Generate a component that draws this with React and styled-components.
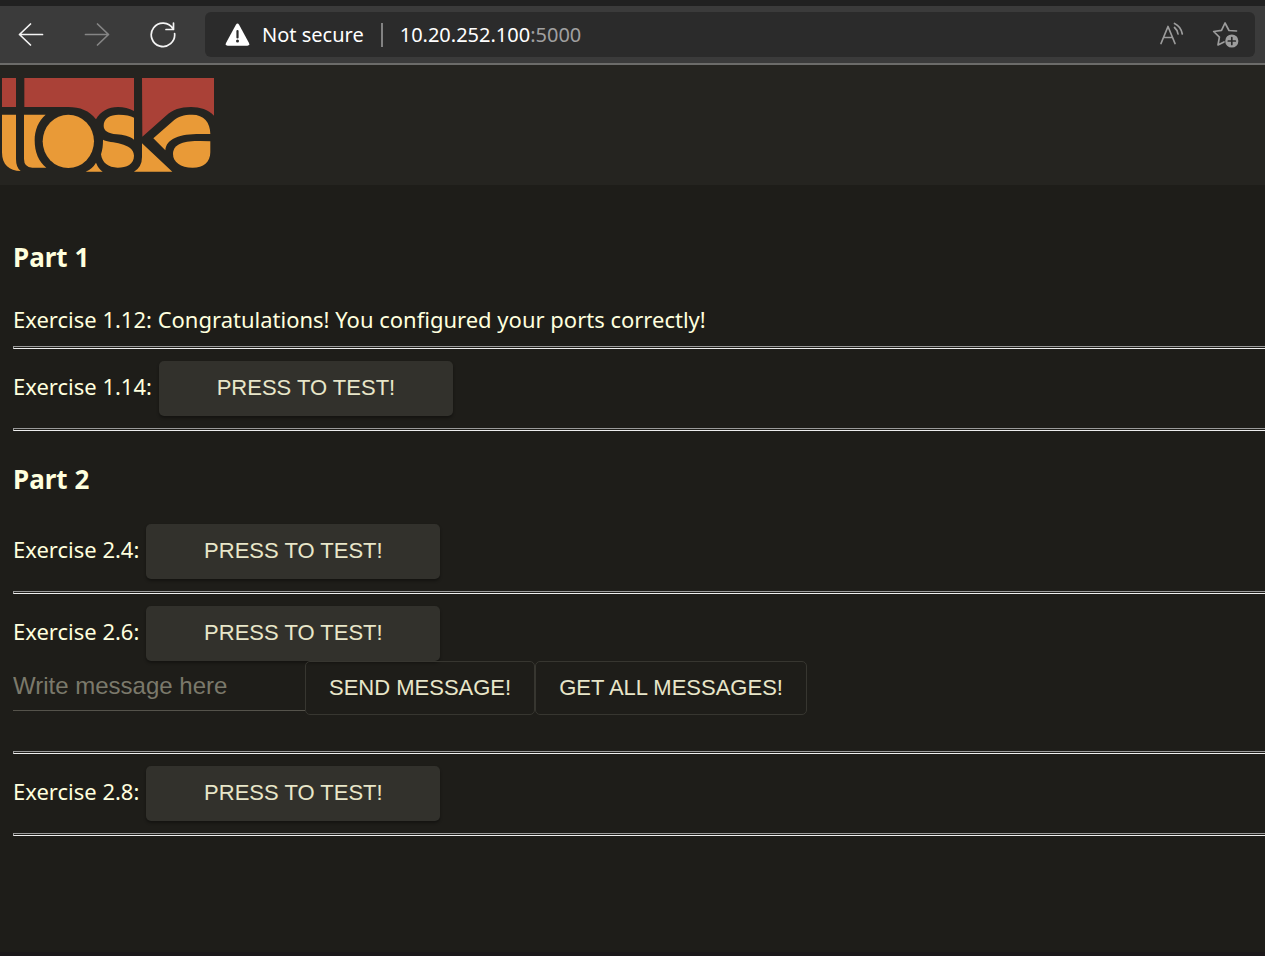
import React from "react";
import styled, { createGlobalStyle } from "styled-components";

const GlobalStyle = createGlobalStyle`
  * { box-sizing: border-box; }
  html, body, #root { height: 100%; }
  body {
    margin: 0;
    background: #1e1d19;
    color: #ffffde;
    font-family: "Noto Sans", "Open Sans", sans-serif;
  }
  button, input { font-family: "Liberation Sans", Arial, sans-serif; }
`;

const Window = styled.div`
  min-height: 100%;
  display: flex;
  flex-direction: column;
  border-top: 6px solid #212121;
  border-bottom: 4px solid #1b181a;
`;

const BrowserBar = styled.div`
  display: flex;
  align-items: center;
  height: 59px;
  padding: 0 10px;
  background: #3b3b3b;
  border-bottom: 2px solid #6c6c6a;
`;

const IconButton = styled.button`
  display: flex;
  align-items: center;
  justify-content: center;
  width: 42px;
  height: 42px;
  padding: 0;
  border: 0;
  background: none;
  color: ${(p) => (p.$dim ? "#858585" : "#f4f4f4")};
`;

const NavButtons = styled.nav`
  display: flex;
  gap: 24px;
  margin-right: 21px;
`;

const AddressBar = styled.div`
  flex: 1;
  display: flex;
  align-items: center;
  height: 45px;
  padding: 0 8px 0 20px;
  border-radius: 6px;
  background: #2b2b2b;
  font-size: 20px;
  line-height: 28px;
`;

const SiteInfo = styled.button`
  display: flex;
  align-items: center;
  gap: 12px;
  padding: 0;
  border: 0;
  background: none;
  color: #fff;
  font-family: "Noto Sans", "Open Sans", sans-serif;
  font-size: 20px;
  line-height: 28px;
`;

const Separator = styled.span`
  width: 2px;
  height: 24px;
  margin: 0 17px;
  background: #828282;
`;

const Address = styled.span`
  flex: 1;
  color: #fff;
`;

const Port = styled.span`
  color: #a0a0a0;
`;

const AddressActions = styled.div`
  display: flex;
  gap: 12px;
`;

const Header = styled.header`
  height: 120px;
  background: #252420;
`;

const Logo = styled.svg`
  display: block;
  width: 230px;
  height: 120px;
`;

const Main = styled.main`
  padding: 24px 0 24px 13px;
`;

const PartTitle = styled.h2`
  margin: 30px 0 27px;
  font-size: 26px;
  line-height: 36px;
  font-weight: 700;
`;

const Exercise = styled.section`
  font-size: 22px;
  line-height: 30px;
`;

const Line = styled.div`
  display: flex;
  align-items: baseline;
  gap: 7px;
`;

const Result = styled.p`
  margin: 0;
  padding-top: 2px;
`;

const Rule = styled.hr`
  height: 3px;
  margin: 12px 0;
  border: solid;
  border-width: 1px 0 1px 1px;
  border-color: #9a9a9a #eee #eee #9a9a9a;
`;

const TestButton = styled.button`
  width: 294px;
  height: 55px;
  padding: 0 0 2px;
  border: 0;
  border-radius: 5px;
  background: #32312c;
  box-shadow: 0 2px 3px rgba(0, 0, 0, 0.35);
  color: #e8e6c9;
  font-size: 22px;
`;

const MessageForm = styled.form`
  display: flex;
  align-items: flex-start;
  margin-bottom: 36px;
`;

const MessageInput = styled.input`
  width: 292px;
  height: 50px;
  padding: 0;
  border: 0;
  border-bottom: 1px solid #55534b;
  background: none;
  color: #ffffde;
  font-size: 24px;
  &::placeholder {
    color: #7b796b;
    opacity: 1;
  }
`;

const OutlineButton = styled.button`
  height: 54px;
  padding: 0 23px;
  border: 1px solid #373630;
  border-radius: 5px;
  background: none;
  color: #e8e6c9;
  font-size: 22px;
`;

function ToskaLogo() {
  return (
    <Logo viewBox="0 0 690 360" role="img" aria-label="toska">
      <g fill="#aa4137">
        <path d="M6 39H48V126H6Z" />
        <path d="M73 39H402V138Q380 126 354 126C325 126 301 139 288 163C268 137 240 126 205 126H73Z" />
        <path d="M426 39H642V152C625 134 600 126 573 126C540 126 519 134 498 152L427 215Z" />
      </g>
      <g fill="#e99a37">
        <path d="M6 149H48V282Q48 308 62 318C28 318 6 300 6 262Z" />
        <path d="M72 149H137C115 168 104 195 104 226C104 262 116 290 139 308H97Q72 307 72 282Z" />
        <ellipse cx="205" cy="229" rx="77" ry="80" />
        <path d="M402 158V224C388 213 370 210 350 208C323 205 311 197 311 182C311 160 330 149 356 149Q387 149 402 158Z" />
        <path d="M309 224C330 235 402 231 402 272C402 297 380 308 353 308C325 308 306 293 303 268C308 253 309 240 309 224Z" />
        <path d="M257 320Q277 312 288 293Q295 311 308 320Z" />
        <path d="M426 235L517 320H402Q426 306 426 276Z" />
        <path d="M460 220L520 167C535 154 550 149 577 149C611 149 631 172 631 207H600C540 207 499 220 496 256Z" />
        <path d="M631 229V260C631 292 610 308 578 308C541 308 519 291 519 267C519 235 555 228 600 228Z" />
      </g>
    </Logo>
  );
}

const stroke = {
  fill: "none",
  stroke: "currentColor",
  strokeWidth: 1.7,
  strokeLinecap: "round",
  strokeLinejoin: "round",
};

const BackIcon = () => (
  <svg width="26" height="26" viewBox="0 0 26 26" {...stroke}>
    <path d="M24.500 12.500H1.500M12.500 2 1.500 12.500 12.500 23" />
  </svg>
);

const ForwardIcon = () => (
  <svg width="26" height="26" viewBox="0 0 26 26" {...stroke}>
    <path d="M1.500 12.500H24.500M13.500 2 24.500 12.500 13.500 23" />
  </svg>
);

const ReloadIcon = () => (
  <svg width="26" height="26" viewBox="0 0 26 26" {...stroke}>
    <path d="M24.600 11.500A11.700 11.700 0 1 1 23 6.800M23.500 1V7.500H16" />
  </svg>
);

const WarningIcon = () => (
  <svg width="25" height="24" viewBox="0 0 25 24">
    <path
      d="M10.900 1.800Q12.500 -.6 14.100 1.800L24 20Q25 22.600 22.300 22.800H2.700Q0 22.600 1 20Z"
      fill="#fff"
    />
    <path d="M12.500 8V14.500" stroke="#2b2b2b" strokeWidth="2.200" strokeLinecap="round" />
    <circle cx="12.500" cy="18" r="1.500" fill="#2b2b2b" />
  </svg>
);

const ReadAloudIcon = () => (
  <svg width="26" height="26" viewBox="0 0 26 26" {...stroke} stroke="#9c9c9c">
    <path d="M2 21.500 9 4.500 16 21.500M4.500 15.500H13.500M15.500 5.500Q18.500 8 19 12M15.500 1.500Q22 4.500 23.300 12" />
  </svg>
);

const FavoriteIcon = () => (
  <svg width="28" height="28" viewBox="0 0 28 28" {...stroke} stroke="#9c9c9c">
    <path d="M24.500 10 17 9.500 13 2 9.500 9.300 1.700 10.500 7.400 16.200 6 24 12 21" />
    <circle cx="19.800" cy="20" r="6.600" fill="#9c9c9c" stroke="none" />
    <path d="M19.800 16.500V23.500M16.300 20H23.300" stroke="#2b2b2b" />
  </svg>
);

function TestLine({ id }) {
  return (
    <Line>
      <span>Exercise {id}:</span>
      <TestButton type="button">PRESS TO TEST!</TestButton>
    </Line>
  );
}

export default function App() {
  return (
    <>
      <GlobalStyle />
      <Window>
        <BrowserBar>
          <NavButtons>
            <IconButton aria-label="Back"><BackIcon /></IconButton>
            <IconButton aria-label="Forward" $dim><ForwardIcon /></IconButton>
            <IconButton aria-label="Refresh"><ReloadIcon /></IconButton>
          </NavButtons>
          <AddressBar>
            <SiteInfo type="button">
              <WarningIcon />
              Not secure
            </SiteInfo>
            <Separator />
            <Address>10.20.252.100<Port>:5000</Port></Address>
            <AddressActions>
              <IconButton aria-label="Read aloud"><ReadAloudIcon /></IconButton>
              <IconButton aria-label="Add to favorites"><FavoriteIcon /></IconButton>
            </AddressActions>
          </AddressBar>
        </BrowserBar>
        <Header>
          <ToskaLogo />
        </Header>
        <Main>
          <PartTitle>Part 1</PartTitle>
          <Exercise>
            <Result>Exercise 1.12: Congratulations! You configured your ports correctly!</Result>
          </Exercise>
          <Rule />
          <Exercise><TestLine id="1.14" /></Exercise>
          <Rule />
          <PartTitle>Part 2</PartTitle>
          <Exercise><TestLine id="2.4" /></Exercise>
          <Rule />
          <Exercise>
            <TestLine id="2.6" />
            <MessageForm onSubmit={(e) => e.preventDefault()}>
              <MessageInput aria-label="Message" placeholder="Write message here" />
              <OutlineButton type="submit">SEND MESSAGE!</OutlineButton>
              <OutlineButton type="button">GET ALL MESSAGES!</OutlineButton>
            </MessageForm>
          </Exercise>
          <Rule />
          <Exercise><TestLine id="2.8" /></Exercise>
          <Rule />
        </Main>
      </Window>
    </>
  );
}
